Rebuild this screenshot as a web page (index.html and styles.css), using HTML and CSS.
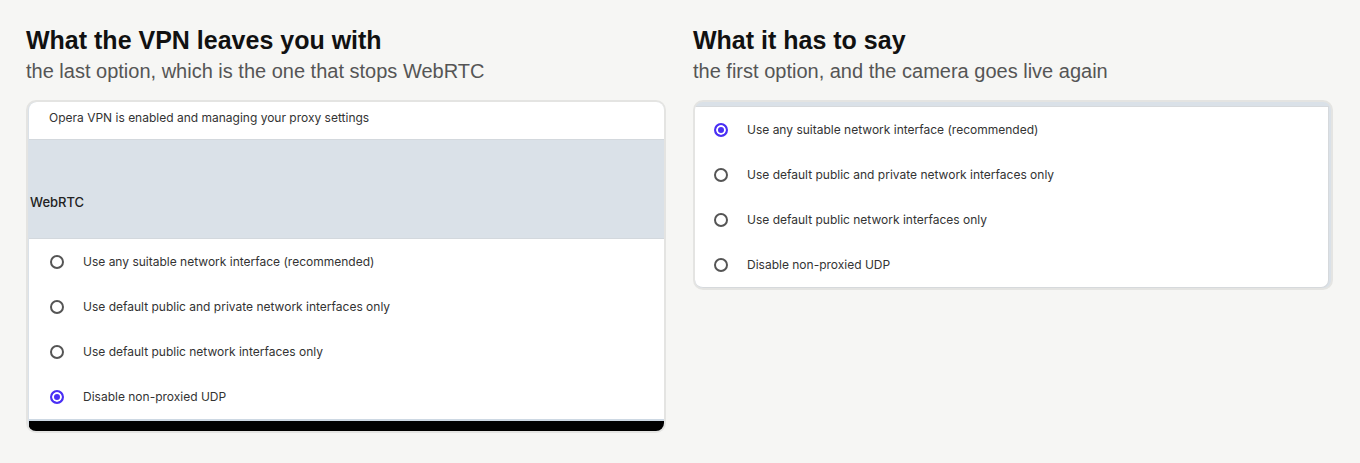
FILE: index.html
```html
<!DOCTYPE html>
<html lang="en">
  <head>
    <meta charset="UTF-8" />
    <title>WebRTC setting with and without VPN</title>
    <link rel="stylesheet" href="styles.css">
  </head>
  <body>
    <main class="compare">
      <!-- left: what the VPN leaves -->
      <section class="panel">
        <h2 class="panel-title">What the VPN leaves you with</h2>
        <p class="panel-sub">the last option, which is the one that stops WebRTC</p>
        <div class="shot shot-left">
          <div class="notice">Opera VPN is enabled and managing your proxy settings</div>
          <div class="group-head">WebRTC</div>
          <div class="options">
            <label class="option"><span class="radio"></span>Use any suitable network interface (recommended)</label>
            <label class="option"><span class="radio"></span>Use default public and private network interfaces only</label>
            <label class="option"><span class="radio"></span>Use default public network interfaces only</label>
            <label class="option"><span class="radio checked"></span>Disable non-proxied UDP</label>
          </div>
          <div class="shot-foot"></div>
        </div>
      </section>

      <!-- right: what it should say -->
      <section class="panel">
        <h2 class="panel-title">What it has to say</h2>
        <p class="panel-sub">the first option, and the camera goes live again</p>
        <div class="shot shot-right">
          <div class="options">
            <label class="option"><span class="radio checked"></span>Use any suitable network interface (recommended)</label>
            <label class="option"><span class="radio"></span>Use default public and private network interfaces only</label>
            <label class="option"><span class="radio"></span>Use default public network interfaces only</label>
            <label class="option"><span class="radio"></span>Disable non-proxied UDP</label>
          </div>
        </div>
      </section>
    </main>
  </body>
</html>
```

FILE: styles.css
```css
body {
  margin: 0;
  background: #f6f6f4;
  font-family: "Liberation Sans", Arial, sans-serif;
  color: #111;
}

.compare {
  display: grid;
  grid-template-columns: 640px 640px;
  gap: 27px;
  padding: 25px 26px 0 26px;
}

.panel-title {
  margin: 0;
  font-size: 25px;
  line-height: 30px;
  font-weight: bold;
  color: #111;
}

.panel-sub {
  margin: 3px 0 0;
  font-size: 20px;
  line-height: 26px;
  color: #555;
}

/* screenshot frame */
.shot {
  margin-top: 16px;
  border: 2px solid #e4e4e2;
  border-radius: 10px;
  overflow: hidden;
  background: #dae1e8;
  font-family: Inter, "Noto Sans", sans-serif;
}

.shot-left {
  padding-left: 1px;
}

.notice {
  height: 37px;
  line-height: 32px;
  padding-left: 20px;
  background: #fff;
  border-bottom: 1px solid #d3d8dd;
  border-top-left-radius: 8px;
  font-size: 12px;
  color: #333;
}

.group-head {
  height: 98px;
  box-sizing: border-box;
  padding: 54px 0 0 1px;
  font-size: 13px;
  font-weight: 500;
  color: #222;
}

.options {
  background: #fff;
  border-top: 1px solid #d3d8dd;
}

.option {
  display: flex;
  align-items: center;
  height: 45px;
  padding-left: 21px;
  font-size: 12px;
  color: #333;
}

.radio {
  width: 10px;
  height: 10px;
  border: 2px solid #555;
  border-radius: 50%;
  margin-right: 19px;
  flex: none;
}

.radio.checked {
  border-color: #4a2ff4;
  background: #4a2ff4;
  box-shadow: inset 0 0 0 2px #fff;
}

.shot-foot {
  height: 10px;
  background: #000;
  border-top: 2px solid #cdd8e3;
}

.shot-right {
  padding-top: 4px;
  padding-right: 2px;
}

.shot-right .options {
  border: 1px solid #d6d9dc;
  border-left: none;
  border-radius: 0 0 8px 8px;
}

.shot-right .option {
  padding-left: 19px;
}
```
